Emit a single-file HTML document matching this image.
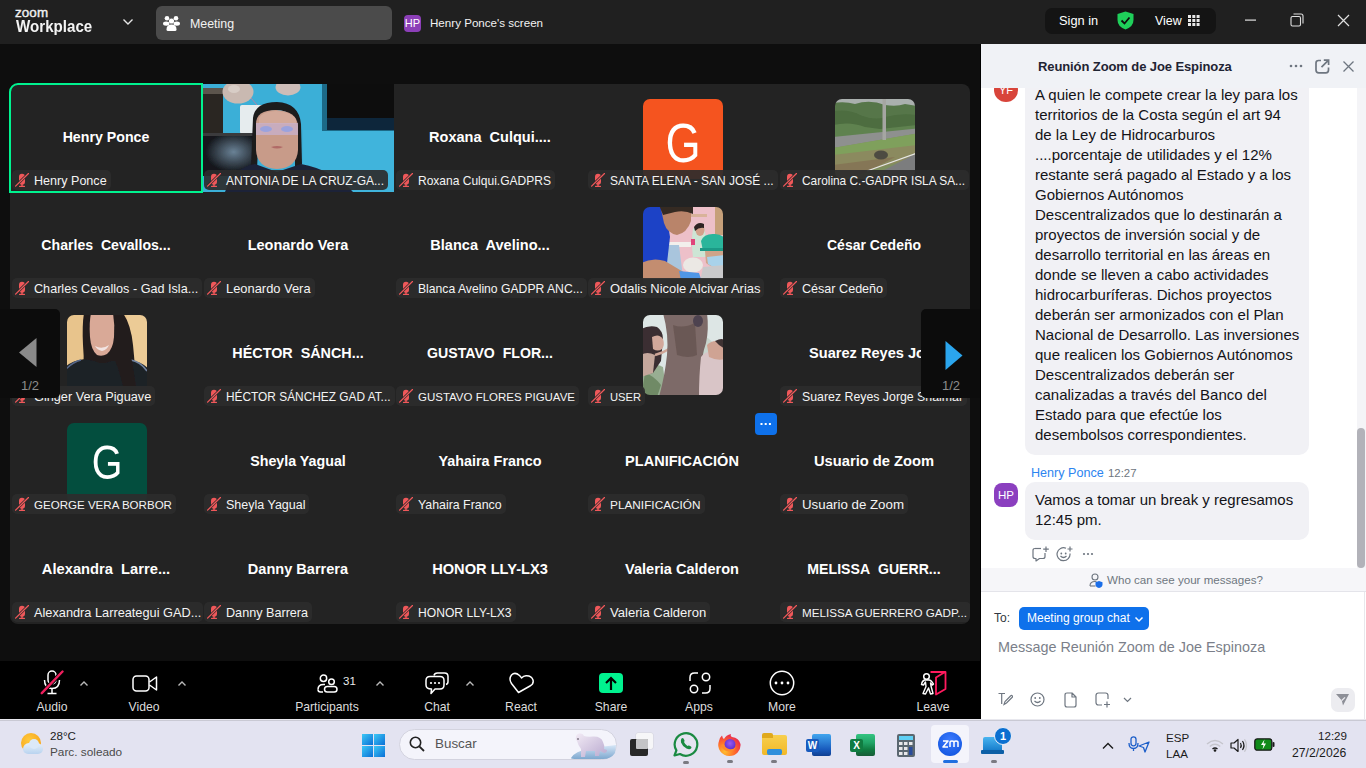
<!DOCTYPE html>
<html><head><meta charset="utf-8"><title>Zoom Meeting</title><style>
*{margin:0;padding:0;box-sizing:border-box}
html,body{width:1366px;height:768px;overflow:hidden;background:#0e0e0e;font-family:"Liberation Sans",sans-serif}
.abs{position:absolute;white-space:nowrap}
#topbar{position:absolute;left:0;top:0;width:1366px;height:44px;background:#202020}
.logo-zoom{position:absolute;left:15px;top:5px;font-size:13.4px;font-weight:400;color:#f0f0f0;letter-spacing:0.1px;-webkit-text-stroke:0.4px #f0f0f0}
.logo-wp{position:absolute;left:16px;top:18px;font-size:15.6px;font-weight:700;color:#f4f4f4;transform:scaleX(0.97);transform-origin:0 0}
#meettab{position:absolute;left:156px;top:6px;width:236px;height:34px;border-radius:6px;background:#4b4b4b}
.hpbadge{background:#8c3fb8;color:#fff;text-align:center}
#signpill{position:absolute;left:1045px;top:8px;width:171px;height:26px;border-radius:7px;background:#141414}
#grid{position:absolute;left:10px;top:84px;width:960px;height:540px;background:#232323;border-radius:8px;overflow:hidden}
.cell{position:absolute;width:192px;height:108px}
.cname{position:absolute;left:0;top:45px;width:192px;text-align:center;font-size:14.3px;font-weight:700;color:#fff;white-space:nowrap;overflow:hidden}
.av{position:absolute;left:57px;top:15px;width:80px;height:80px;border-radius:7px;overflow:hidden}
.avg{position:absolute;left:0;top:17px;width:80px;text-align:center;font-size:50px;color:#fff}
.lbl{position:absolute;left:2px;top:86px;height:20px;max-width:191px;border-radius:5px;background:rgba(44,44,44,0.92);padding:0 4px 0 22px;overflow:hidden}
.ltx{display:block;font-size:12.8px;line-height:22px;color:#f4f4f4;white-space:nowrap}
#activeb{position:absolute;left:9px;top:83px;width:194px;height:110px;border:2px solid #00f28f;border-radius:9px 0 0 0}
.nav{position:absolute;top:309px;width:60px;height:89px;background:#0c0c0c}
.navt{position:absolute;top:69px;width:60px;text-align:center;font-size:13px;color:#8c8c8c}
#toolbar{position:absolute;left:0;top:661px;width:981px;height:58px;background:#000}
.tl{position:absolute;top:700px;width:80px;text-align:center;font-size:12.2px;color:#dcdcdc}
#chat{position:absolute;left:981px;top:44px;width:385px;height:676px;background:#fff;overflow:hidden}
#chathead{position:absolute;left:0;top:0;width:385px;height:44px;background:#f0f2f6}
#msgs{position:absolute;left:0;top:44px;width:385px;height:480px;overflow:hidden;background:#fff}
.ml{position:absolute;font-size:15px;line-height:20px;color:#131318;white-space:nowrap}
#whocan{position:absolute;left:0;top:524px;width:385px;height:24px;background:#f6f6f9;border-bottom:1px solid #e4e4ea}
#inputarea{position:absolute;left:0;top:548px;width:385px;height:128px;background:#fff}
#taskbar{position:absolute;left:0;top:720px;width:1366px;height:48px;background:#e3e3f1;border-top:1px solid #c9c9d4}
</style></head>
<body>

<div id="topbar">
  <div class="logo-zoom">zoom</div>
  <div class="logo-wp">Workplace</div>
  <svg class="abs" style="left:122px;top:18px" width="12" height="8" viewBox="0 0 12 8"><path d="M1.5 1.5 L6 6 L10.5 1.5" stroke="#e6e6e6" stroke-width="1.4" fill="none"/></svg>
  <div id="meettab">
    <svg class="abs" style="left:7px;top:9px" width="17" height="16" viewBox="0 0 17 16">
      <circle cx="4" cy="3.2" r="2.3" fill="#fff"/><circle cx="13" cy="3.2" r="2.3" fill="#fff"/><circle cx="8.5" cy="6" r="2.6" fill="#fff"/>
      <ellipse cx="3.2" cy="8.6" rx="3.2" ry="2.2" fill="#fff"/><ellipse cx="13.8" cy="8.6" rx="3.2" ry="2.2" fill="#fff"/>
      <path d="M3.5 14.5 Q3.5 9.5 8.5 9.5 Q13.5 9.5 13.5 14.5 Q13.5 16 12 16 L5 16 Q3.5 16 3.5 14.5Z" fill="#fff"/>
    </svg>
    <span class="abs" style="left:34px;top:11px;font-size:12.4px;color:#f2f2f2">Meeting</span>
  </div>
  <div class="abs hpbadge" style="left:404px;top:15px;width:17px;height:17px;font-size:11px;line-height:17px;border-radius:4px">HP</div>
  <span class="abs" style="left:430px;top:16px;font-size:11.6px;color:#f2f2f2">Henry Ponce's screen</span>

  <div id="signpill">
    <span class="abs" style="left:14px;top:5px;font-size:12.8px;color:#fff">Sign in</span>
    <svg class="abs" style="left:72px;top:3px" width="17" height="19" viewBox="0 0 17 19"><path d="M8.5 0.5 L16.5 3 L16.5 9 Q16.5 15.5 8.5 18.5 Q0.5 15.5 0.5 9 L0.5 3 Z" fill="#1fcf5a"/><path d="M4.5 9.5 L7.5 12.5 L12.5 6.5" stroke="#0d0d0d" stroke-width="1.8" fill="none"/></svg>
    <span class="abs" style="left:110px;top:6px;font-size:12.4px;color:#fff">View</span>
    <svg class="abs" style="left:143px;top:7px" width="12" height="11" viewBox="0 0 12 11"><g fill="#e8e8e8"><rect x="0" y="0" width="3" height="3"/><rect x="4.3" y="0" width="3" height="3"/><rect x="8.6" y="0" width="3" height="3"/><rect x="0" y="4" width="3" height="3"/><rect x="4.3" y="4" width="3" height="3"/><rect x="8.6" y="4" width="3" height="3"/><rect x="0" y="8" width="3" height="3"/><rect x="4.3" y="8" width="3" height="3"/><rect x="8.6" y="8" width="3" height="3"/></g></svg>
  </div>
  <svg class="abs" style="left:1245px;top:19px" width="12" height="3"><rect x="0" y="0.5" width="11" height="1.2" fill="#e0e0e0"/></svg>
  <svg class="abs" style="left:1290px;top:13px" width="14" height="14" viewBox="0 0 14 14"><rect x="1" y="3.5" width="9.5" height="9.5" rx="1.5" stroke="#e0e0e0" stroke-width="1.1" fill="none"/><path d="M3.5 1 L11 1 Q13 1 13 3 L13 10.5" stroke="#e0e0e0" stroke-width="1.1" fill="none"/></svg>
  <svg class="abs" style="left:1337px;top:14px" width="13" height="13" viewBox="0 0 13 13"><path d="M1 1 L12 12 M12 1 L1 12" stroke="#e0e0e0" stroke-width="1.2"/></svg>
</div>

<div id="grid">
<div class="cell" style="left:0px;top:0px"><div class="cname" style="font-size:14.2px">Henry Ponce</div><div class="lbl"><svg class="abs" style="left:3px;top:3px" width="14" height="14" viewBox="0 0 14 14"><rect x="4" y="0.8" width="6" height="11" rx="3" fill="#f0585a"/><rect x="6.3" y="11" width="1.4" height="2" fill="#f0585a"/><rect x="4" y="12.7" width="6" height="1.3" rx="0.6" fill="#f0585a"/><path d="M0.3 13.4 L13.7 0.2" stroke="#2b2b2b" stroke-width="2.6"/><path d="M0.6 13.1 L13.5 0.5" stroke="#f0585a" stroke-width="1.3" stroke-linecap="round"/></svg><span class="ltx" style="font-size:12.57px">Henry Ponce</span></div></div>
<div class="cell" style="left:192px;top:0px"><svg class="abs" style="left:1px;top:0" width="191" height="108" viewBox="0 0 191 108"><defs><filter id="vbl" x="-5%" y="-5%" width="110%" height="110%"><feGaussianBlur stdDeviation="0.6"/></filter>
<radialGradient id="refl" cx="0.6" cy="0.4" r="0.5"><stop offset="0" stop-color="#6a8296"/><stop offset="1" stop-color="#15181d"/></radialGradient></defs>
<g filter="url(#vbl)">
<rect x="-3" y="-3" width="197" height="114" fill="#3bafd7"/>
<rect x="100" y="46" width="94" height="65" fill="#3fb4dc"/>
<rect x="-3" y="4" width="23" height="48" fill="#2b2521"/>
<rect x="-3" y="4" width="23" height="6" fill="#5b544d"/>
<ellipse cx="35" cy="8" rx="15.5" ry="11.5" fill="#c9b9b1"/>
<ellipse cx="31" cy="5" rx="6" ry="4" fill="#d8cdc6"/>
<ellipse cx="85" cy="3" rx="12.5" ry="8.5" fill="#cdbdb8"/>
<path d="M48 14 L54 21" stroke="#d07a9a" stroke-width="0.8"/>
<rect x="37" y="21" width="24" height="29" rx="2" fill="#e6ecee"/>
<rect x="-3" y="49" width="56" height="3" fill="#3b3b3d"/>
<rect x="-3" y="52" width="56" height="40" fill="url(#refl)"/>
<rect x="119" y="-3" width="75" height="50" fill="#1e6a88"/>
<rect x="124" y="-3" width="70" height="37" fill="#0f0e11"/>
<rect x="124" y="34" width="70" height="12" fill="#10283a"/>
<path d="M50 34 Q52 18 74 18 Q96 19 98 40 L99 80 L92 86 L92 40 Q88 26 74 26 Q58 26 56 40 L54 86 L48 82 Z" fill="#1d1a1f"/>
<path d="M53 40 Q53 26 73 26 Q94 27 95 42 L95 66 Q94 84 74 85 Q54 84 53 66 Z" fill="#c89b89"/>
<path d="M56 34 Q60 27 73 27 Q90 28 93 36 L93 40 L56 40 Z" fill="#d3a999"/>
<path d="M53 39 L95 39 L95 51 L53 51 Z" fill="#c8b1cf" opacity="0.75"/>
<ellipse cx="63" cy="45" rx="6" ry="3" fill="#8fa0e6" opacity="0.8"/>
<ellipse cx="84" cy="45" rx="6" ry="3" fill="#8fa0e6" opacity="0.8"/>
<path d="M68 63 Q74 61 80 63 Q74 66 68 63Z" fill="#b06a66"/>
<path d="M22 108 Q30 84 52 80 L74 88 L98 80 Q130 86 150 108 Z" fill="#1d2239"/>
</g></svg><div class="lbl"><svg class="abs" style="left:3px;top:3px" width="14" height="14" viewBox="0 0 14 14"><rect x="4" y="0.8" width="6" height="11" rx="3" fill="#f0585a"/><rect x="6.3" y="11" width="1.4" height="2" fill="#f0585a"/><rect x="4" y="12.7" width="6" height="1.3" rx="0.6" fill="#f0585a"/><path d="M0.3 13.4 L13.7 0.2" stroke="#2b2b2b" stroke-width="2.6"/><path d="M0.6 13.1 L13.5 0.5" stroke="#f0585a" stroke-width="1.3" stroke-linecap="round"/></svg><span class="ltx" style="font-size:12.02px">ANTONIA DE LA CRUZ-GA...</span></div></div>
<div class="cell" style="left:384px;top:0px"><div class="cname" style="font-size:14.53px">Roxana&nbsp; Culqui....</div><div class="lbl"><svg class="abs" style="left:3px;top:3px" width="14" height="14" viewBox="0 0 14 14"><rect x="4" y="0.8" width="6" height="11" rx="3" fill="#f0585a"/><rect x="6.3" y="11" width="1.4" height="2" fill="#f0585a"/><rect x="4" y="12.7" width="6" height="1.3" rx="0.6" fill="#f0585a"/><path d="M0.3 13.4 L13.7 0.2" stroke="#2b2b2b" stroke-width="2.6"/><path d="M0.6 13.1 L13.5 0.5" stroke="#f0585a" stroke-width="1.3" stroke-linecap="round"/></svg><span class="ltx" style="font-size:12.03px">Roxana Culqui.GADPRS</span></div></div>
<div class="cell" style="left:576px;top:0px"><div class="av" style="background:#f5541f"><span class="avg" style="font-size:55px;line-height:55px;top:17px;transform:scaleX(0.82)">G</span></div><div class="lbl"><svg class="abs" style="left:3px;top:3px" width="14" height="14" viewBox="0 0 14 14"><rect x="4" y="0.8" width="6" height="11" rx="3" fill="#f0585a"/><rect x="6.3" y="11" width="1.4" height="2" fill="#f0585a"/><rect x="4" y="12.7" width="6" height="1.3" rx="0.6" fill="#f0585a"/><path d="M0.3 13.4 L13.7 0.2" stroke="#2b2b2b" stroke-width="2.6"/><path d="M0.6 13.1 L13.5 0.5" stroke="#f0585a" stroke-width="1.3" stroke-linecap="round"/></svg><span class="ltx" style="font-size:11.99px">SANTA ELENA - SAN JOSÉ ...</span></div></div>
<div class="cell" style="left:768px;top:0px"><div class="av"><svg class="abs" style="left:0;top:0" width="80" height="80" viewBox="0 0 80 80"><defs><filter id="bl54959" x="-10%" y="-10%" width="120%" height="120%"><feGaussianBlur stdDeviation="0.5"/></filter></defs><g filter="url(#bl54959)">
<rect x="-2" y="-2" width="84" height="84" fill="#7d8f5e"/>
<rect x="-2" y="-2" width="84" height="10" fill="#aab0ae"/>
<path d="M-2 4 Q10 2 20 5 Q35 0 50 6 Q62 8 70 5 L82 7 L82 31 L-2 39 Z" fill="#56764a"/>
<path d="M-2 12 Q15 10 25 16 Q40 22 50 18 Q65 14 82 16 L82 30 L-2 38 Z" fill="#4d6d3f"/>
<path d="M-2 26 Q15 22 30 28 L45 30 L82 26 L82 31 L-2 39 Z" fill="#5f8250"/>
<path d="M-2 38 L82 29.5 L82 34.5 L-2 49 Z" fill="#8e908f"/>
<path d="M-2 49 L82 34.5 L82 56 L-2 82 Z" fill="#7fa05c"/>
<path d="M-2 56 L82 46 L82 58 L-2 82 Z" fill="#8b8a5e"/>
<path d="M-2 66 L60 58 L30 74 L-2 82 Z" fill="#857656"/>
<path d="M28 82 L82 54 L82 82 Z" fill="#7c7d7e"/>
<path d="M32 72 L82 54" stroke="#e6e6e6" stroke-width="1.3"/>
<rect x="47.5" y="-2" width="3.5" height="43" fill="#a5a6a2"/>
<ellipse cx="46" cy="56" rx="7" ry="4.5" fill="#4e4c42"/>
</g></svg></div><div class="lbl"><svg class="abs" style="left:3px;top:3px" width="14" height="14" viewBox="0 0 14 14"><rect x="4" y="0.8" width="6" height="11" rx="3" fill="#f0585a"/><rect x="6.3" y="11" width="1.4" height="2" fill="#f0585a"/><rect x="4" y="12.7" width="6" height="1.3" rx="0.6" fill="#f0585a"/><path d="M0.3 13.4 L13.7 0.2" stroke="#2b2b2b" stroke-width="2.6"/><path d="M0.6 13.1 L13.5 0.5" stroke="#f0585a" stroke-width="1.3" stroke-linecap="round"/></svg><span class="ltx" style="font-size:11.89px">Carolina C.-GADPR ISLA SA...</span></div></div>
<div class="cell" style="left:0px;top:108px"><div class="cname" style="font-size:14.1px">Charles&nbsp; Cevallos...</div><div class="lbl"><svg class="abs" style="left:3px;top:3px" width="14" height="14" viewBox="0 0 14 14"><rect x="4" y="0.8" width="6" height="11" rx="3" fill="#f0585a"/><rect x="6.3" y="11" width="1.4" height="2" fill="#f0585a"/><rect x="4" y="12.7" width="6" height="1.3" rx="0.6" fill="#f0585a"/><path d="M0.3 13.4 L13.7 0.2" stroke="#2b2b2b" stroke-width="2.6"/><path d="M0.6 13.1 L13.5 0.5" stroke="#f0585a" stroke-width="1.3" stroke-linecap="round"/></svg><span class="ltx" style="font-size:12.64px">Charles Cevallos - Gad Isla...</span></div></div>
<div class="cell" style="left:192px;top:108px"><div class="cname" style="font-size:14.51px">Leonardo Vera</div><div class="lbl"><svg class="abs" style="left:3px;top:3px" width="14" height="14" viewBox="0 0 14 14"><rect x="4" y="0.8" width="6" height="11" rx="3" fill="#f0585a"/><rect x="6.3" y="11" width="1.4" height="2" fill="#f0585a"/><rect x="4" y="12.7" width="6" height="1.3" rx="0.6" fill="#f0585a"/><path d="M0.3 13.4 L13.7 0.2" stroke="#2b2b2b" stroke-width="2.6"/><path d="M0.6 13.1 L13.5 0.5" stroke="#f0585a" stroke-width="1.3" stroke-linecap="round"/></svg><span class="ltx" style="font-size:12.9px">Leonardo Vera</span></div></div>
<div class="cell" style="left:384px;top:108px"><div class="cname" style="font-size:14.55px">Blanca&nbsp; Avelino...</div><div class="lbl"><svg class="abs" style="left:3px;top:3px" width="14" height="14" viewBox="0 0 14 14"><rect x="4" y="0.8" width="6" height="11" rx="3" fill="#f0585a"/><rect x="6.3" y="11" width="1.4" height="2" fill="#f0585a"/><rect x="4" y="12.7" width="6" height="1.3" rx="0.6" fill="#f0585a"/><path d="M0.3 13.4 L13.7 0.2" stroke="#2b2b2b" stroke-width="2.6"/><path d="M0.6 13.1 L13.5 0.5" stroke="#f0585a" stroke-width="1.3" stroke-linecap="round"/></svg><span class="ltx" style="font-size:12.18px">Blanca Avelino GADPR ANC...</span></div></div>
<div class="cell" style="left:576px;top:108px"><div class="av"><svg class="abs" style="left:0;top:0" width="80" height="80" viewBox="0 0 80 80"><defs><filter id="bl49196" x="-10%" y="-10%" width="120%" height="120%"><feGaussianBlur stdDeviation="0.6"/></filter></defs><g filter="url(#bl49196)">
<rect x="-2" y="-2" width="84" height="84" fill="#edc0c9"/>
<rect x="72" y="-2" width="10" height="30" fill="#c6a07a"/>
<rect x="44" y="7" width="20" height="3" fill="#d9b39a"/>
<rect x="26" y="35" width="22" height="5" fill="#f2efec"/>
<path d="M50 22 Q55 16 61 20 L63 30 Q66 40 64 50 L50 50 Q48 35 50 22Z" fill="#cde5d5"/>
<ellipse cx="57" cy="23" rx="4.5" ry="6" fill="#d2a08b"/>
<path d="M51 20 Q55 14 61 17 L61 21 Q56 20 52 24 Z" fill="#2d2422"/>
<rect x="48" y="32" width="4" height="6" fill="#e0457a"/>
<path d="M22 38 L36 38 L40 70 L22 70Z" fill="#a9c5dd"/>
<path d="M-2 -2 L16 -2 L24 10 L27 30 L24 56 L-2 62 Z" fill="#1f43c6"/>
<path d="M18 2 Q30 -4 48 2 L48 14 Q44 26 34 28 Q24 26 21 16 Z" fill="#b9846a"/>
<path d="M16 -2 L50 -2 L50 7 Q42 3 32 5 L20 8 Z" fill="#352a24"/>
<path d="M-2 56 Q10 50 22 54 L42 66 L40 74 L-2 76Z" fill="#c38d6f"/>
<ellipse cx="50" cy="58" rx="10" ry="7.5" fill="#ebe8e4"/>
<path d="M36 64 L56 66 L58 72 L38 73 Z" fill="#4f96e6"/>
<path d="M58 34 Q61 26 72 27 Q82 28 82 34 L82 44 L60 44 Z" fill="#2bb59b"/>
<rect x="57" y="41" width="25" height="3" fill="#1f9a86"/>
<path d="M62 44 L82 44 L82 60 Q70 62 63 56 Z" fill="#cfa48a"/>
<path d="M64 50 L82 48 L82 60 Q72 62 65 57 Z" fill="#a9d2ea"/>
<path d="M60 60 L82 58 L82 80 L56 80 Z" fill="#c9c9cb"/>
<rect x="-2" y="72" width="84" height="10" fill="#3b3d42"/>
</g></svg></div><div class="lbl"><svg class="abs" style="left:3px;top:3px" width="14" height="14" viewBox="0 0 14 14"><rect x="4" y="0.8" width="6" height="11" rx="3" fill="#f0585a"/><rect x="6.3" y="11" width="1.4" height="2" fill="#f0585a"/><rect x="4" y="12.7" width="6" height="1.3" rx="0.6" fill="#f0585a"/><path d="M0.3 13.4 L13.7 0.2" stroke="#2b2b2b" stroke-width="2.6"/><path d="M0.6 13.1 L13.5 0.5" stroke="#f0585a" stroke-width="1.3" stroke-linecap="round"/></svg><span class="ltx" style="font-size:12.96px">Odalis Nicole Alcivar Arias</span></div></div>
<div class="cell" style="left:768px;top:108px"><div class="cname" style="font-size:13.97px">César Cedeño</div><div class="lbl"><svg class="abs" style="left:3px;top:3px" width="14" height="14" viewBox="0 0 14 14"><rect x="4" y="0.8" width="6" height="11" rx="3" fill="#f0585a"/><rect x="6.3" y="11" width="1.4" height="2" fill="#f0585a"/><rect x="4" y="12.7" width="6" height="1.3" rx="0.6" fill="#f0585a"/><path d="M0.3 13.4 L13.7 0.2" stroke="#2b2b2b" stroke-width="2.6"/><path d="M0.6 13.1 L13.5 0.5" stroke="#f0585a" stroke-width="1.3" stroke-linecap="round"/></svg><span class="ltx" style="font-size:12.59px">César Cedeño</span></div></div>
<div class="cell" style="left:0px;top:216px"><div class="av"><svg class="abs" style="left:0;top:0" width="80" height="80" viewBox="0 0 80 80"><defs><filter id="bl19691" x="-10%" y="-10%" width="120%" height="120%"><feGaussianBlur stdDeviation="0.7"/></filter></defs><g filter="url(#bl19691)">
<rect x="-2" y="-2" width="84" height="84" fill="#e8c48c"/>
<rect x="60" y="-2" width="22" height="60" fill="#eccb96"/>
<path d="M17 -2 L56 -2 Q64 10 66 30 Q68 50 70 80 L14 80 Q18 50 16 30 Q15 10 17 -2 Z" fill="#231c1d"/>
<path d="M24 -2 L46 -2 Q48 10 47 22 Q46 34 40 39 Q35 42 30 40 Q24 35 23 22 Q22 8 24 -2 Z" fill="#d9a997"/>
<path d="M28 31 Q35 35 42 30 Q40 35 35 36 Q30 35 28 31Z" fill="#f2e4e2"/>
<path d="M-2 52 Q6 45 18 44 L28 46 Q35 50 44 46 L62 45 Q74 46 82 54 L82 82 L-2 82 Z" fill="#1f2125"/>
<path d="M64 45 Q74 47 80 56" stroke="#6f82a0" stroke-width="1.6" fill="none"/>
<path d="M-1 54 Q6 47 14 45" stroke="#55688a" stroke-width="1.4" fill="none"/>
<path d="M44 38 Q52 50 58 80 L70 80 Q66 50 62 30 Z" fill="#231c1d"/>
</g></svg></div><div class="lbl"><svg class="abs" style="left:3px;top:3px" width="14" height="14" viewBox="0 0 14 14"><rect x="4" y="0.8" width="6" height="11" rx="3" fill="#f0585a"/><rect x="6.3" y="11" width="1.4" height="2" fill="#f0585a"/><rect x="4" y="12.7" width="6" height="1.3" rx="0.6" fill="#f0585a"/><path d="M0.3 13.4 L13.7 0.2" stroke="#2b2b2b" stroke-width="2.6"/><path d="M0.6 13.1 L13.5 0.5" stroke="#f0585a" stroke-width="1.3" stroke-linecap="round"/></svg><span class="ltx" style="font-size:12.71px">Ginger Vera Piguave</span></div></div>
<div class="cell" style="left:192px;top:216px"><div class="cname" style="font-size:14.37px">HÉCTOR&nbsp; SÁNCH...</div><div class="lbl"><svg class="abs" style="left:3px;top:3px" width="14" height="14" viewBox="0 0 14 14"><rect x="4" y="0.8" width="6" height="11" rx="3" fill="#f0585a"/><rect x="6.3" y="11" width="1.4" height="2" fill="#f0585a"/><rect x="4" y="12.7" width="6" height="1.3" rx="0.6" fill="#f0585a"/><path d="M0.3 13.4 L13.7 0.2" stroke="#2b2b2b" stroke-width="2.6"/><path d="M0.6 13.1 L13.5 0.5" stroke="#f0585a" stroke-width="1.3" stroke-linecap="round"/></svg><span class="ltx" style="font-size:11.89px">HÉCTOR SÁNCHEZ GAD AT...</span></div></div>
<div class="cell" style="left:384px;top:216px"><div class="cname" style="font-size:14.13px">GUSTAVO&nbsp; FLOR...</div><div class="lbl"><svg class="abs" style="left:3px;top:3px" width="14" height="14" viewBox="0 0 14 14"><rect x="4" y="0.8" width="6" height="11" rx="3" fill="#f0585a"/><rect x="6.3" y="11" width="1.4" height="2" fill="#f0585a"/><rect x="4" y="12.7" width="6" height="1.3" rx="0.6" fill="#f0585a"/><path d="M0.3 13.4 L13.7 0.2" stroke="#2b2b2b" stroke-width="2.6"/><path d="M0.6 13.1 L13.5 0.5" stroke="#f0585a" stroke-width="1.3" stroke-linecap="round"/></svg><span class="ltx" style="font-size:11.49px">GUSTAVO FLORES PIGUAVE</span></div></div>
<div class="cell" style="left:576px;top:216px"><div class="av"><svg class="abs" style="left:0;top:0" width="80" height="80" viewBox="0 0 80 80"><defs><filter id="bl16928" x="-10%" y="-10%" width="120%" height="120%"><feGaussianBlur stdDeviation="0.6"/></filter></defs><g filter="url(#bl16928)">
<rect x="-2" y="-2" width="84" height="84" fill="#dde6e5"/>
<path d="M60 20 Q70 25 74 35 L82 30 L82 50 L60 50 Z" fill="#c8d5cd"/>
<path d="M-2 50 Q8 46 20 52 L24 82 L-2 82 Z" fill="#98ae92"/>
<path d="M2 58 Q10 60 18 70 L14 82 L-2 82 Z" fill="#6f8a66"/>
<path d="M-2 14 Q6 10 14 12 Q20 16 20 24 L18 46 L10 58 L-2 60 Z" fill="#3a2e30"/>
<path d="M9 22 Q16 18 20 24 Q22 30 19 34 Q15 37 10 34 Z" fill="#d2a89b"/>
<path d="M-2 40 Q4 36 12 40 L10 58 L-2 62 Z" fill="#c5a79c"/>
<path d="M12 40 Q20 38 26 34" stroke="#cfa597" stroke-width="2.5" fill="none"/>
<path d="M20 -2 L64 -2 Q66 14 63 28 Q58 42 58 60 L56 82 L16 82 Q22 60 24 40 Q26 20 20 -2 Z" fill="#7d6a67"/>
<path d="M30 10 Q40 14 52 8 L54 40 Q46 44 34 40 Z" fill="#6b5855"/>
<ellipse cx="55" cy="6" rx="5" ry="6" fill="#4d4350"/>
<path d="M58 42 Q64 34 74 38 L82 36 L82 82 L56 82 Q56 60 58 42 Z" fill="#d9c5c7"/>
<path d="M64 30 Q70 24 78 27 L82 30 L82 44 Q74 46 66 42 Z" fill="#cfa393"/>
<path d="M72 26 Q80 22 82 26 L82 34 L76 30 Z" fill="#3e3033"/>
</g></svg></div><div class="lbl"><svg class="abs" style="left:3px;top:3px" width="14" height="14" viewBox="0 0 14 14"><rect x="4" y="0.8" width="6" height="11" rx="3" fill="#f0585a"/><rect x="6.3" y="11" width="1.4" height="2" fill="#f0585a"/><rect x="4" y="12.7" width="6" height="1.3" rx="0.6" fill="#f0585a"/><path d="M0.3 13.4 L13.7 0.2" stroke="#2b2b2b" stroke-width="2.6"/><path d="M0.6 13.1 L13.5 0.5" stroke="#f0585a" stroke-width="1.3" stroke-linecap="round"/></svg><span class="ltx" style="font-size:11.19px">USER</span></div></div>
<div class="cell" style="left:768px;top:216px"><div class="cname" style="left:31px;width:auto;text-align:left;font-size:14.6px">Suarez Reyes Jo...</div><div class="lbl"><svg class="abs" style="left:3px;top:3px" width="14" height="14" viewBox="0 0 14 14"><rect x="4" y="0.8" width="6" height="11" rx="3" fill="#f0585a"/><rect x="6.3" y="11" width="1.4" height="2" fill="#f0585a"/><rect x="4" y="12.7" width="6" height="1.3" rx="0.6" fill="#f0585a"/><path d="M0.3 13.4 L13.7 0.2" stroke="#2b2b2b" stroke-width="2.6"/><path d="M0.6 13.1 L13.5 0.5" stroke="#f0585a" stroke-width="1.3" stroke-linecap="round"/></svg><span class="ltx" style="font-size:12.33px">Suarez Reyes Jorge Shaimar</span></div></div>
<div class="cell" style="left:0px;top:324px"><div class="av" style="background:#034e3e"><span class="avg" style="font-size:48px;line-height:48px;top:15.5px;transform:scaleX(0.82)">G</span></div><div class="lbl"><svg class="abs" style="left:3px;top:3px" width="14" height="14" viewBox="0 0 14 14"><rect x="4" y="0.8" width="6" height="11" rx="3" fill="#f0585a"/><rect x="6.3" y="11" width="1.4" height="2" fill="#f0585a"/><rect x="4" y="12.7" width="6" height="1.3" rx="0.6" fill="#f0585a"/><path d="M0.3 13.4 L13.7 0.2" stroke="#2b2b2b" stroke-width="2.6"/><path d="M0.6 13.1 L13.5 0.5" stroke="#f0585a" stroke-width="1.3" stroke-linecap="round"/></svg><span class="ltx" style="font-size:11.55px">GEORGE VERA BORBOR</span></div></div>
<div class="cell" style="left:192px;top:324px"><div class="cname" style="font-size:14.26px">Sheyla Yagual</div><div class="lbl"><svg class="abs" style="left:3px;top:3px" width="14" height="14" viewBox="0 0 14 14"><rect x="4" y="0.8" width="6" height="11" rx="3" fill="#f0585a"/><rect x="6.3" y="11" width="1.4" height="2" fill="#f0585a"/><rect x="4" y="12.7" width="6" height="1.3" rx="0.6" fill="#f0585a"/><path d="M0.3 13.4 L13.7 0.2" stroke="#2b2b2b" stroke-width="2.6"/><path d="M0.6 13.1 L13.5 0.5" stroke="#f0585a" stroke-width="1.3" stroke-linecap="round"/></svg><span class="ltx" style="font-size:12.5px">Sheyla Yagual</span></div></div>
<div class="cell" style="left:384px;top:324px"><div class="cname" style="font-size:14.4px">Yahaira Franco</div><div class="lbl"><svg class="abs" style="left:3px;top:3px" width="14" height="14" viewBox="0 0 14 14"><rect x="4" y="0.8" width="6" height="11" rx="3" fill="#f0585a"/><rect x="6.3" y="11" width="1.4" height="2" fill="#f0585a"/><rect x="4" y="12.7" width="6" height="1.3" rx="0.6" fill="#f0585a"/><path d="M0.3 13.4 L13.7 0.2" stroke="#2b2b2b" stroke-width="2.6"/><path d="M0.6 13.1 L13.5 0.5" stroke="#f0585a" stroke-width="1.3" stroke-linecap="round"/></svg><span class="ltx" style="font-size:12.37px">Yahaira Franco</span></div></div>
<div class="cell" style="left:576px;top:324px"><div class="cname" style="font-size:14.54px">PLANIFICACIÓN</div><div class="lbl"><svg class="abs" style="left:3px;top:3px" width="14" height="14" viewBox="0 0 14 14"><rect x="4" y="0.8" width="6" height="11" rx="3" fill="#f0585a"/><rect x="6.3" y="11" width="1.4" height="2" fill="#f0585a"/><rect x="4" y="12.7" width="6" height="1.3" rx="0.6" fill="#f0585a"/><path d="M0.3 13.4 L13.7 0.2" stroke="#2b2b2b" stroke-width="2.6"/><path d="M0.6 13.1 L13.5 0.5" stroke="#f0585a" stroke-width="1.3" stroke-linecap="round"/></svg><span class="ltx" style="font-size:11.82px">PLANIFICACIÓN</span></div></div>
<div class="cell" style="left:768px;top:324px"><div class="cname" style="font-size:14.71px">Usuario de Zoom</div><div class="lbl"><svg class="abs" style="left:3px;top:3px" width="14" height="14" viewBox="0 0 14 14"><rect x="4" y="0.8" width="6" height="11" rx="3" fill="#f0585a"/><rect x="6.3" y="11" width="1.4" height="2" fill="#f0585a"/><rect x="4" y="12.7" width="6" height="1.3" rx="0.6" fill="#f0585a"/><path d="M0.3 13.4 L13.7 0.2" stroke="#2b2b2b" stroke-width="2.6"/><path d="M0.6 13.1 L13.5 0.5" stroke="#f0585a" stroke-width="1.3" stroke-linecap="round"/></svg><span class="ltx" style="font-size:13.3px">Usuario de Zoom</span></div></div>
<div class="cell" style="left:0px;top:432px"><div class="cname" style="font-size:14.71px">Alexandra&nbsp; Larre...</div><div class="lbl"><svg class="abs" style="left:3px;top:3px" width="14" height="14" viewBox="0 0 14 14"><rect x="4" y="0.8" width="6" height="11" rx="3" fill="#f0585a"/><rect x="6.3" y="11" width="1.4" height="2" fill="#f0585a"/><rect x="4" y="12.7" width="6" height="1.3" rx="0.6" fill="#f0585a"/><path d="M0.3 13.4 L13.7 0.2" stroke="#2b2b2b" stroke-width="2.6"/><path d="M0.6 13.1 L13.5 0.5" stroke="#f0585a" stroke-width="1.3" stroke-linecap="round"/></svg><span class="ltx" style="font-size:12.76px">Alexandra Larreategui GAD...</span></div></div>
<div class="cell" style="left:192px;top:432px"><div class="cname" style="font-size:14.55px">Danny Barrera</div><div class="lbl"><svg class="abs" style="left:3px;top:3px" width="14" height="14" viewBox="0 0 14 14"><rect x="4" y="0.8" width="6" height="11" rx="3" fill="#f0585a"/><rect x="6.3" y="11" width="1.4" height="2" fill="#f0585a"/><rect x="4" y="12.7" width="6" height="1.3" rx="0.6" fill="#f0585a"/><path d="M0.3 13.4 L13.7 0.2" stroke="#2b2b2b" stroke-width="2.6"/><path d="M0.6 13.1 L13.5 0.5" stroke="#f0585a" stroke-width="1.3" stroke-linecap="round"/></svg><span class="ltx" style="font-size:12.63px">Danny Barrera</span></div></div>
<div class="cell" style="left:384px;top:432px"><div class="cname" style="font-size:14.63px">HONOR LLY-LX3</div><div class="lbl"><svg class="abs" style="left:3px;top:3px" width="14" height="14" viewBox="0 0 14 14"><rect x="4" y="0.8" width="6" height="11" rx="3" fill="#f0585a"/><rect x="6.3" y="11" width="1.4" height="2" fill="#f0585a"/><rect x="4" y="12.7" width="6" height="1.3" rx="0.6" fill="#f0585a"/><path d="M0.3 13.4 L13.7 0.2" stroke="#2b2b2b" stroke-width="2.6"/><path d="M0.6 13.1 L13.5 0.5" stroke="#f0585a" stroke-width="1.3" stroke-linecap="round"/></svg><span class="ltx" style="font-size:12.12px">HONOR LLY-LX3</span></div></div>
<div class="cell" style="left:576px;top:432px"><div class="cname" style="font-size:14.54px">Valeria Calderon</div><div class="lbl"><svg class="abs" style="left:3px;top:3px" width="14" height="14" viewBox="0 0 14 14"><rect x="4" y="0.8" width="6" height="11" rx="3" fill="#f0585a"/><rect x="6.3" y="11" width="1.4" height="2" fill="#f0585a"/><rect x="4" y="12.7" width="6" height="1.3" rx="0.6" fill="#f0585a"/><path d="M0.3 13.4 L13.7 0.2" stroke="#2b2b2b" stroke-width="2.6"/><path d="M0.6 13.1 L13.5 0.5" stroke="#f0585a" stroke-width="1.3" stroke-linecap="round"/></svg><span class="ltx" style="font-size:13.05px">Valeria Calderon</span></div></div>
<div class="cell" style="left:768px;top:432px"><div class="cname" style="font-size:14.11px">MELISSA&nbsp; GUERR...</div><div class="lbl"><svg class="abs" style="left:3px;top:3px" width="14" height="14" viewBox="0 0 14 14"><rect x="4" y="0.8" width="6" height="11" rx="3" fill="#f0585a"/><rect x="6.3" y="11" width="1.4" height="2" fill="#f0585a"/><rect x="4" y="12.7" width="6" height="1.3" rx="0.6" fill="#f0585a"/><path d="M0.3 13.4 L13.7 0.2" stroke="#2b2b2b" stroke-width="2.6"/><path d="M0.6 13.1 L13.5 0.5" stroke="#f0585a" stroke-width="1.3" stroke-linecap="round"/></svg><span class="ltx" style="font-size:11.67px">MELISSA GUERRERO GADP...</span></div></div>
</div>
<div id="activeb"></div>

<div class="nav" style="left:0;border-radius:0 5px 5px 0">
  <svg class="abs" style="left:19px;top:29px" width="18" height="29" viewBox="0 0 18 29"><path d="M17.5 0 L17.5 29 L0 14.5 Z" fill="#8a8a8a"/></svg>
  <div class="navt">1/2</div>
</div>
<div class="nav" style="left:921px;border-radius:5px 0 0 5px">
  <svg class="abs" style="left:24px;top:32px" width="18" height="29" viewBox="0 0 18 29"><path d="M0.5 0 L17.5 14.5 L0.5 29 Z" fill="#2ba6ee"/></svg>
  <div class="navt">1/2</div>
</div>
<div class="abs" style="left:755px;top:413px;width:22px;height:22px;border-radius:4px;background:#0e71eb"></div>
<svg class="abs" style="left:760px;top:423px" width="12" height="3"><rect x="0.5" y="0" width="2" height="2" fill="#fff"/><rect x="4.7" y="0" width="2" height="2" fill="#fff"/><rect x="8.9" y="0" width="2" height="2" fill="#fff"/></svg>


<div id="toolbar"></div>
<svg class="abs" style="left:40px;top:670px" width="24" height="25" viewBox="0 0 24 25">
  <rect x="8" y="1" width="8" height="13" rx="4" stroke="#fff" stroke-width="1.5" fill="none"/>
  <path d="M4.5 10 Q4.5 18.5 12 18.5 Q19.5 18.5 19.5 10" stroke="#fff" stroke-width="1.5" fill="none"/>
  <path d="M12 18.5 L12 23.5 M7.5 23.5 L16.5 23.5" stroke="#fff" stroke-width="1.5"/>
  <path d="M1.5 23.5 L22.5 1.5" stroke="#000" stroke-width="4"/>
  <path d="M1.8 23.2 L22.5 1.5" stroke="#ee1f5d" stroke-width="2.4" stroke-linecap="round"/>
</svg>
<div class="tl" style="left:12px">Audio</div>
<svg class="abs" style="left:79px;top:680px" width="10" height="7" viewBox="0 0 10 7"><path d="M1.5 5.5 L5 2 L8.5 5.5" stroke="#b9b9b9" stroke-width="1.4" fill="none"/></svg>
<svg class="abs" style="left:132px;top:675px" width="26" height="17" viewBox="0 0 26 17"><rect x="1" y="1" width="16" height="15" rx="3.5" stroke="#fff" stroke-width="1.5" fill="none"/><path d="M17.5 7 L24.5 2 L24.5 15 L17.5 10" stroke="#fff" stroke-width="1.5" fill="none" stroke-linejoin="round"/></svg>
<div class="tl" style="left:104px">Video</div>
<svg class="abs" style="left:177px;top:680px" width="10" height="7" viewBox="0 0 10 7"><path d="M1.5 5.5 L5 2 L8.5 5.5" stroke="#b9b9b9" stroke-width="1.4" fill="none"/></svg>
<svg class="abs" style="left:317px;top:674px" width="21" height="19" viewBox="0 0 21 19"><circle cx="6.5" cy="4.2" r="3.2" stroke="#fff" stroke-width="1.5" fill="none"/><path d="M1 15.5 Q1 10.5 6.5 10.5 L8 10.5" stroke="#fff" stroke-width="1.5" fill="none"/><path d="M1 15.5 Q1 18 3.5 18 L6 18" stroke="#fff" stroke-width="1.5" fill="none"/><circle cx="14.5" cy="7.8" r="2.8" stroke="#fff" stroke-width="1.5" fill="none"/><rect x="7.5" y="12.5" width="12.5" height="5.5" rx="2.75" stroke="#fff" stroke-width="1.5" fill="none"/></svg>
<div class="abs" style="left:343px;top:675px;font-size:11.5px;color:#eaeaea">31</div>
<div class="tl" style="left:287px">Participants</div>
<svg class="abs" style="left:375px;top:680px" width="10" height="7" viewBox="0 0 10 7"><path d="M1.5 5.5 L5 2 L8.5 5.5" stroke="#b9b9b9" stroke-width="1.4" fill="none"/></svg>
<svg class="abs" style="left:425px;top:672px" width="24" height="23" viewBox="0 0 24 23"><path d="M9 3.5 Q9.5 1 12.5 1 L19.5 1 Q23 1 23 4.5 L23 9.5 Q23 12 21 12.5" stroke="#fff" stroke-width="1.5" fill="none"/><path d="M5 4.5 L15 4.5 Q19 4.5 19 8.5 L19 13 Q19 17 15 17 L10 17 L6 21.5 L6.5 17 Q1 17 1 13 L1 8.5 Q1 4.5 5 4.5 Z" stroke="#fff" stroke-width="1.5" fill="#000" stroke-linejoin="round"/><circle cx="6" cy="11" r="1.1" fill="#fff"/><circle cx="10" cy="11" r="1.1" fill="#fff"/><circle cx="14" cy="11" r="1.1" fill="#fff"/></svg>
<div class="tl" style="left:397px">Chat</div>
<svg class="abs" style="left:465px;top:680px" width="10" height="7" viewBox="0 0 10 7"><path d="M1.5 5.5 L5 2 L8.5 5.5" stroke="#b9b9b9" stroke-width="1.4" fill="none"/></svg>
<svg class="abs" style="left:509px;top:672px" width="26" height="22" viewBox="0 0 26 22"><path d="M9.5 20.5 L2.5 11.5 Q-0.5 7 2.5 3 Q6 -0.5 10.5 3.5 Q12 5 12.5 6 Q14.5 4 17 3.8 Q22.5 3.5 24 8 Q25 12 21 14 Z" stroke="#fff" stroke-width="1.5" fill="none" stroke-linejoin="round"/></svg>
<div class="tl" style="left:481px">React</div>
<div class="abs" style="left:599px;top:673px;width:24px;height:20px;border-radius:4px;background:#00f28f"></div>
<svg class="abs" style="left:603px;top:675px" width="16" height="16" viewBox="0 0 16 16"><path d="M8 15 L8 3.5 M3 8 L8 3 L13 8" stroke="#000" stroke-width="2.2" fill="none"/></svg>
<div class="tl" style="left:571px">Share</div>
<svg class="abs" style="left:688px;top:671px" width="24" height="24" viewBox="0 0 24 24"><path d="M2 10 L2 6.5 Q2 2 6.5 2 L10 2" stroke="#fff" stroke-width="1.5" fill="none"/><circle cx="18" cy="6" r="3.7" stroke="#fff" stroke-width="1.5" fill="none"/><circle cx="6" cy="18" r="3.7" stroke="#fff" stroke-width="1.5" fill="none"/><path d="M22 14 L22 17.5 Q22 22 17.5 22 L14 22" stroke="#fff" stroke-width="1.5" fill="none"/></svg>
<div class="tl" style="left:659px">Apps</div>
<svg class="abs" style="left:769px;top:670px" width="26" height="26" viewBox="0 0 26 26"><circle cx="13" cy="13" r="11.7" stroke="#fff" stroke-width="1.5" fill="none"/><circle cx="7" cy="13" r="1.4" fill="#fff"/><circle cx="13" cy="13" r="1.4" fill="#fff"/><circle cx="19" cy="13" r="1.4" fill="#fff"/></svg>
<div class="tl" style="left:742px">More</div>
<svg class="abs" style="left:920px;top:669px" width="28" height="27" viewBox="0 0 28 27"><path d="M10.5 3 L25.5 3 L25.5 20 L16 25.5 L16 8.5 L25 3" stroke="#ff1a5e" stroke-width="1.8" fill="none" stroke-linejoin="round"/><circle cx="6.5" cy="7.5" r="2.8" stroke="#fff" stroke-width="1.5" fill="none"/><path d="M4.5 11 Q2 12 1.5 15.5 L3.5 16 L5.5 13 L6 17.5 L3 24.5 L5.5 25 L8.5 19 L10.5 25 L13 24.5 L11 17 L10.5 14 L12.5 16 L13.5 15 Q11 11 9 11 Z" stroke="#fff" stroke-width="1.4" fill="#000" stroke-linejoin="round"/></svg>
<div class="tl" style="left:893px">Leave</div>


<div id="chat">
  <div id="msgs">
    <div class="abs" style="left:44px;top:-40px;width:284px;height:407px;border-radius:10px;background:#f1f1f5"></div>
    <div class="abs" style="left:13px;top:-10px;width:24px;height:24px;border-radius:12px;background:#d8443a;color:#fff;font-size:11px;text-align:center;line-height:24px">YF</div>
    <div class="ml" style="left:54px;top:-3px">A quien le compete crear la ley para los</div>
<div class="ml" style="left:54px;top:17px">territorios de la Costa según el art 94</div>
<div class="ml" style="left:54px;top:37px">de la Ley de Hidrocarburos</div>
<div class="ml" style="left:54px;top:57px">....porcentaje de utilidades y el 12%</div>
<div class="ml" style="left:54px;top:77px">restante será pagado al Estado y a los</div>
<div class="ml" style="left:54px;top:97px">Gobiernos Autónomos</div>
<div class="ml" style="left:54px;top:117px">Descentralizados que lo destinarán a</div>
<div class="ml" style="left:54px;top:137px">proyectos de inversión social y de</div>
<div class="ml" style="left:54px;top:157px">desarrollo territorial en las áreas en</div>
<div class="ml" style="left:54px;top:177px">donde se lleven a cabo actividades</div>
<div class="ml" style="left:54px;top:197px">hidrocarburíferas. Dichos proyectos</div>
<div class="ml" style="left:54px;top:217px">deberán ser armonizados con el Plan</div>
<div class="ml" style="left:54px;top:237px">Nacional de Desarrollo. Las inversiones</div>
<div class="ml" style="left:54px;top:257px">que realicen los Gobiernos Autónomos</div>
<div class="ml" style="left:54px;top:277px">Descentralizados deberán ser</div>
<div class="ml" style="left:54px;top:297px">canalizadas a través del Banco del</div>
<div class="ml" style="left:54px;top:317px">Estado para que efectúe los</div>
<div class="ml" style="left:54px;top:337px">desembolsos correspondientes.</div>
    <div class="abs" style="left:50px;top:378px;font-size:12.6px;color:#2d84f0">Henry Ponce</div>
    <div class="abs" style="left:127px;top:379px;font-size:11.4px;color:#6e7680">12:27</div>
    <div class="abs" style="left:13px;top:395px;width:24px;height:24px;border-radius:8px;background:#8b3fbf;color:#fff;font-size:11.5px;text-align:center;line-height:24px">HP</div>
    <div class="abs" style="left:44px;top:394px;width:284px;height:58px;border-radius:10px;background:#f1f1f5"></div>
    <div class="ml" style="left:54px;top:402px">Vamos a tomar un break y regresamos</div>
<div class="ml" style="left:54px;top:422px">12:45 pm.</div>
    <svg class="abs" style="left:51px;top:458px" width="18" height="16" viewBox="0 0 18 16"><path d="M3 2.5 Q1 2.5 1 4.5 L1 10.5 Q1 12.5 3 12.5 L4 12.5 L4 15 L7.5 12.5 L11 12.5 Q13 12.5 13 10.5 L13 7" stroke="#6e7680" stroke-width="1.2" fill="none" stroke-linejoin="round"/><path d="M3 2.5 L9 2.5" stroke="#6e7680" stroke-width="1.2"/><path d="M14 0.5 L14 6 M11.2 3.2 L16.8 3.2" stroke="#6e7680" stroke-width="1.2"/></svg>
    <svg class="abs" style="left:75px;top:458px" width="18" height="16" viewBox="0 0 18 16"><path d="M10 2.2 A6.5 6.5 0 1 0 14 7.5" stroke="#6e7680" stroke-width="1.2" fill="none"/><circle cx="5.3" cy="7.5" r="0.9" fill="#6e7680"/><circle cx="9.7" cy="7.5" r="0.9" fill="#6e7680"/><path d="M4.5 10 Q7.5 13 10.5 10" stroke="#6e7680" stroke-width="1.2" fill="none"/><path d="M14 0.5 L14 5.5 M11.5 3 L16.5 3" stroke="#6e7680" stroke-width="1.2"/></svg>
    <svg class="abs" style="left:101px;top:464px" width="12" height="4"><circle cx="2" cy="2" r="1.1" fill="#6e7680"/><circle cx="6" cy="2" r="1.1" fill="#6e7680"/><circle cx="10" cy="2" r="1.1" fill="#6e7680"/></svg>
    <div class="abs" style="left:376px;top:0;width:9px;height:480px;background:#f4f4f7"></div>
    <div class="abs" style="left:376px;top:340px;width:8px;height:140px;border-radius:4px;background:#b2b2b9"></div>
  </div>
  <div id="chathead">
    <div class="abs" style="left:57px;top:15px;font-size:13px;font-weight:700;color:#1f2433;letter-spacing:-0.1px">Reunión Zoom de Joe Espinoza</div>
    <svg class="abs" style="left:308px;top:20px" width="14" height="4"><circle cx="2" cy="2" r="1.3" fill="#6e7680"/><circle cx="7" cy="2" r="1.3" fill="#6e7680"/><circle cx="12" cy="2" r="1.3" fill="#6e7680"/></svg>
    <svg class="abs" style="left:334px;top:15px" width="15" height="15" viewBox="0 0 15 15"><path d="M6 1.5 L3.5 1.5 Q1 1.5 1 4 L1 11 Q1 13.8 3.8 13.8 L10.8 13.8 Q13.5 13.8 13.5 11 L13.5 8.5" stroke="#6e7680" stroke-width="1.7" fill="none"/><path d="M6.5 8.2 L13 1.7 M8.8 1.2 L13.6 1.2 L13.6 6" stroke="#6e7680" stroke-width="1.7" fill="none"/></svg>
    <svg class="abs" style="left:361px;top:16px" width="13" height="13" viewBox="0 0 13 13"><path d="M1.5 1.5 L11.5 11.5 M11.5 1.5 L1.5 11.5" stroke="#6e7680" stroke-width="1.3"/></svg>
  </div>
  <div id="whocan">
    <svg class="abs" style="left:108px;top:5px" width="14" height="15" viewBox="0 0 14 15"><circle cx="6" cy="4" r="3" stroke="#6e7680" stroke-width="1.1" fill="none"/><path d="M1 13 Q1 8.5 6 8.5 Q7 8.5 7.5 8.8" stroke="#6e7680" stroke-width="1.1" fill="none"/><path d="M1 13 L6.5 13" stroke="#6e7680" stroke-width="1.1"/><path d="M10 8 L13.5 9.2 L13.5 11.5 Q13.5 14 10 15 Q6.5 14 6.5 11.5 L6.5 9.2Z" fill="#1b6ee8"/></svg>
    <div class="abs" style="left:126px;top:5px;font-size:11.6px;color:#6e7680">Who can see your messages?</div>
  </div>
  <div id="inputarea">
    <div class="abs" style="left:13px;top:19px;font-size:12px;color:#303742">To:</div>
    <div class="abs" style="left:38px;top:15px;width:130px;height:23px;border-radius:5px;background:#0e71eb"></div>
    <div class="abs" style="left:46px;top:19px;font-size:12px;color:#fff">Meeting group chat</div>
    <svg class="abs" style="left:153px;top:24px" width="10" height="7" viewBox="0 0 10 7"><path d="M1.5 1.5 L5 5 L8.5 1.5" stroke="#fff" stroke-width="1.5" fill="none"/></svg>
    <div class="abs" style="left:17px;top:47px;font-size:14.4px;color:#7b7f8a">Message Reunión Zoom de Joe Espinoza</div>
    <svg class="abs" style="left:17px;top:100px" width="15" height="14" viewBox="0 0 15 14"><path d="M0.5 1.5 L7 1.5 M3.7 1.5 L3.7 12" stroke="#6e7680" stroke-width="1.2" fill="none"/><path d="M6 12.5 L7 9.5 L12.5 4 Q13.5 3 14.3 3.8 Q15 4.6 14 5.5 L8.5 11 Z" stroke="#6e7680" stroke-width="1.1" fill="none"/></svg>
    <svg class="abs" style="left:49px;top:100px" width="15" height="15" viewBox="0 0 15 15"><circle cx="7.5" cy="7.5" r="6.5" stroke="#6e7680" stroke-width="1.2" fill="none"/><circle cx="5.2" cy="6" r="0.9" fill="#6e7680"/><circle cx="9.8" cy="6" r="0.9" fill="#6e7680"/><path d="M4.5 9 Q7.5 12 10.5 9" stroke="#6e7680" stroke-width="1.2" fill="none"/></svg>
    <svg class="abs" style="left:83px;top:100px" width="13" height="16" viewBox="0 0 13 16"><path d="M1 3 Q1 1 3 1 L8 1 L12 5 L12 13 Q12 15 10 15 L3 15 Q1 15 1 13 Z M8 1 L8 5 L12 5" stroke="#6e7680" stroke-width="1.2" fill="none" stroke-linejoin="round"/></svg>
    <svg class="abs" style="left:114px;top:100px" width="16" height="16" viewBox="0 0 16 16"><path d="M13 7 L13 3.5 Q13 1 10.5 1 L3.5 1 Q1 1 1 3.5 L1 10.5 Q1 13 3.5 13 L7 13" stroke="#6e7680" stroke-width="1.2" fill="none"/><path d="M12 9.5 L12 15.5 M9 12.5 L15 12.5" stroke="#6e7680" stroke-width="1.2"/></svg>
    <svg class="abs" style="left:142px;top:105px" width="9" height="6" viewBox="0 0 9 6"><path d="M1 1 L4.5 4.5 L8 1" stroke="#6e7680" stroke-width="1.2" fill="none"/></svg>
    <div class="abs" style="left:383px;top:0;width:1px;height:128px;background:#e8e8ec"></div>
    <div class="abs" style="left:350px;top:96px;width:24px;height:24px;border-radius:7px;background:#ececf0"></div>
    <svg class="abs" style="left:354px;top:101px" width="15" height="13" viewBox="0 0 15 13"><path d="M1 1 L14 1 L8 12.5 L6.8 7.5 Z" fill="#8d8f97"/><path d="M6.8 7.5 L10 4.3" stroke="#ececf0" stroke-width="1.2"/></svg>
  </div>
</div>

<div style="position:absolute;left:980px;top:44px;width:1px;height:676px;background:#000"></div>
<div style="position:absolute;left:0;top:719px;width:1366px;height:1px;background:#e8e8ee"></div>

<div id="taskbar">
  <div class="abs" style="left:21px;top:12px;width:20px;height:20px;border-radius:10px;background:radial-gradient(circle at 40% 35%,#ffc93c,#f49a12)"></div>
  <div class="abs" style="left:23px;top:22px;width:20px;height:11px;border-radius:6px 6px 5px 5px;background:linear-gradient(180deg,#e6f0fb,#b9d3ef)"></div>
  <div class="abs" style="left:29px;top:18px;width:10px;height:10px;border-radius:5px;background:#dce9f8"></div>
  <div class="abs" style="left:50px;top:8px;font-size:11.6px;color:#1b1b1b">28°C</div>
  <div class="abs" style="left:50px;top:24px;font-size:11.8px;color:#4a4a4a">Parc. soleado</div>

  <svg class="abs" style="left:362px;top:13px" width="23" height="23" viewBox="0 0 23 23"><defs><linearGradient id="wg" x1="0" y1="0" x2="1" y2="1"><stop offset="0" stop-color="#3cc8f6"/><stop offset="1" stop-color="#0a6fd6"/></linearGradient></defs><rect x="0" y="0" width="11" height="11" fill="url(#wg)"/><rect x="12" y="0" width="11" height="11" fill="url(#wg)"/><rect x="0" y="12" width="11" height="11" fill="url(#wg)"/><rect x="12" y="12" width="11" height="11" fill="url(#wg)"/></svg>

  <div class="abs" style="left:399px;top:8px;width:218px;height:31px;border-radius:16px;background:#f4f4fb;border:1px solid #d3d3df;box-sizing:border-box"></div>
  <svg class="abs" style="left:409px;top:15px" width="16" height="16" viewBox="0 0 16 16"><circle cx="6.5" cy="6.5" r="5.2" stroke="#222" stroke-width="1.6" fill="none"/><path d="M10.3 10.3 L15 15" stroke="#222" stroke-width="1.8"/></svg>
  <div class="abs" style="left:435px;top:15px;font-size:13.4px;color:#555">Buscar</div>
  <svg class="abs" style="left:569px;top:10px" width="48" height="29" viewBox="0 0 48 29"><defs><linearGradient id="ice" x1="0" y1="0" x2="0" y2="1"><stop offset="0" stop-color="#d6e6f7"/><stop offset="1" stop-color="#7ea8cf"/></linearGradient><linearGradient id="bear" x1="0" y1="0" x2="1" y2="1"><stop offset="0" stop-color="#f2ebf5"/><stop offset="1" stop-color="#b9a9cf"/></linearGradient></defs>
  <path d="M2 27 Q6 20 20 18 Q36 15 47 14 L46 22 Q42 28 34 28 L8 28 Q2 28 2 27Z" fill="url(#ice)"/>
  <path d="M7 5 Q8 2 11 2.5 Q14 2 15 5 Q18 6 24 5.5 Q32 5 34 11 Q36 15 35 18 L38 19 Q38 22 35 22 L31 20 L30 25 L26 25 L26 20 L17 20 L16 26 L12 26 L12 18 Q9 14 8 10 Q6 8 7 5Z" fill="url(#bear)"/>
  <circle cx="9" cy="8" r="0.8" fill="#3a3040"/></svg>

  <div class="abs" style="left:636px;top:12px;width:17px;height:16px;border-radius:2px;background:#f6f6f8;box-shadow:0 0 0 0.5px #d4d4dc"></div>
  <div class="abs" style="left:630px;top:18px;width:18px;height:17px;border-radius:2px;background:#282828"></div>
  <div class="abs" style="left:636px;top:18px;width:12px;height:10px;border-radius:1px;background:#c4c4c6"></div>

  <svg class="abs" style="left:673px;top:10px" width="26" height="26" viewBox="0 0 26 26"><path d="M13 1.5 A11 11 0 1 1 4 20 L1.5 24.5 L6.3 23 A11 11 0 0 0 13 1.5 Z" fill="none"/><path d="M3.4 19.4 A11.3 11.3 0 1 1 7 23 L1.5 24.5 Z" stroke="#1a8a42" stroke-width="2.2" fill="#e4e4f1" stroke-linejoin="round"/><path d="M8.5 7.5 Q9.5 6.5 10.5 7.5 L11.5 9.5 Q11.8 10.3 11 11 Q12 13.5 14.5 15 Q15.2 14.2 16 14.5 L18 15.5 Q19 16.5 18 17.5 Q16.5 19 13.5 17.5 Q9.5 15.5 8 11.5 Q7.5 9 8.5 7.5Z" fill="#1a8a42"/></svg>
  <div class="abs" style="left:683px;top:40px;width:6px;height:3px;border-radius:2px;background:#7a7a82"></div>

  <svg class="abs" style="left:717px;top:11px" width="25" height="25" viewBox="0 0 25 25"><defs><radialGradient id="ffg" cx="0.3" cy="0.8" r="0.9"><stop offset="0" stop-color="#ffbd2e"/><stop offset="0.5" stop-color="#ff6a2b"/><stop offset="1" stop-color="#e2175a"/></radialGradient><radialGradient id="ffp" cx="0.5" cy="0.4" r="0.6"><stop offset="0" stop-color="#9a5cf0"/><stop offset="1" stop-color="#5a2bd0"/></radialGradient></defs><path d="M12.5 24 A11 11 0 0 1 2 9 Q3 5 5 3.5 Q5.5 6 7 7 Q9 3 14 2 Q13 4 15 5 Q22 6 23.5 12 A11 11 0 0 1 12.5 24Z" fill="url(#ffg)"/><circle cx="13" cy="12.5" r="5.5" fill="url(#ffp)"/><path d="M4 13 Q6 19 12 19.5 Q17 19.5 19 15 Q16 18 12 17 Q8 16 7 12Z" fill="#ff8a2a"/></svg>
  <div class="abs" style="left:727px;top:39px;width:6px;height:3px;border-radius:2px;background:#7a7a82"></div>

  <div class="abs" style="left:762px;top:14px;width:25px;height:20px;border-radius:2px;background:linear-gradient(180deg,#f7cf4e,#f2b826)"></div>
  <div class="abs" style="left:762px;top:12px;width:11px;height:5px;border-radius:2px 2px 0 0;background:#e0a91c"></div>
  <div class="abs" style="left:767px;top:28px;width:15px;height:6px;border-radius:2px;background:#2f8fdc"></div>
  <div class="abs" style="left:771px;top:39px;width:6px;height:3px;border-radius:2px;background:#7a7a82"></div>

  <div class="abs" style="left:812px;top:13px;width:19px;height:22px;border-radius:2px;background:linear-gradient(180deg,#41a5ee,#2b7cd3 40%,#185abd 70%,#103f91)"></div>
  <div class="abs" style="left:806px;top:18px;width:13px;height:13px;border-radius:2px;background:#185abd;color:#fff;font-size:10px;font-weight:700;text-align:center;line-height:13px">W</div>

  <div class="abs" style="left:856px;top:13px;width:19px;height:22px;border-radius:2px;background:linear-gradient(180deg,#33c481,#21a366 40%,#107c41 70%,#185c37)"></div>
  <div class="abs" style="left:850px;top:18px;width:13px;height:13px;border-radius:2px;background:#107c41;color:#fff;font-size:10px;font-weight:700;text-align:center;line-height:13px">X</div>

  <div class="abs" style="left:897px;top:13px;width:18px;height:23px;border-radius:2px;background:#5b6770"></div>
  <div class="abs" style="left:899px;top:15px;width:14px;height:4px;background:#5fd0f5"></div>
  <svg class="abs" style="left:899px;top:21px" width="14" height="14" viewBox="0 0 14 14"><g fill="#e8e8ea"><rect x="0" y="0" width="3.5" height="3"/><rect x="5" y="0" width="3.5" height="3"/><rect x="10" y="0" width="3.5" height="3"/><rect x="0" y="5" width="3.5" height="3"/><rect x="5" y="5" width="3.5" height="3"/><rect x="0" y="10" width="3.5" height="3"/><rect x="5" y="10" width="3.5" height="3"/></g><rect x="10" y="5" width="3.5" height="8" fill="#2a4c9a"/></svg>

  <div class="abs" style="left:931px;top:4px;width:38px;height:38px;border-radius:4px;background:#f4f4fb"></div>
  <div class="abs" style="left:938px;top:11px;width:24px;height:24px;border-radius:12px;background:radial-gradient(circle at 50% 35%,#3d7bff,#0b4fd9)"></div>
  <svg class="abs" style="left:942px;top:18px" width="17" height="10" viewBox="0 0 17 10"><path d="M1 2 L6 2 L1 8 L6 8" stroke="#fff" stroke-width="1.5" fill="none" stroke-linejoin="round"/><path d="M8 8 L8 3.5 Q8 2 10 2 Q12 2 12 3.5 L12 8 M12 3.5 Q12 2 14 2 Q16 2 16 3.5 L16 8" stroke="#fff" stroke-width="1.5" fill="none"/></svg>
  <div class="abs" style="left:943px;top:39px;width:15px;height:3px;border-radius:2px;background:#1f6fe0"></div>

  <div class="abs" style="left:983px;top:16px;width:19px;height:15px;border-radius:2px;background:linear-gradient(180deg,#49b4f0,#1177c8)"></div>
  <div class="abs" style="left:981px;top:29px;width:23px;height:4px;border-radius:1px;background:#0d5fa6"></div>
  <div class="abs" style="left:994px;top:6px;width:18px;height:18px;border-radius:9px;background:#0b6fd0;border:1px solid #eef0f8;box-sizing:border-box;color:#fff;font-size:11px;font-weight:700;text-align:center;line-height:16px">1</div>
  <div class="abs" style="left:991px;top:39px;width:6px;height:3px;border-radius:2px;background:#7a7a82"></div>

  <svg class="abs" style="left:1102px;top:21px" width="12" height="8" viewBox="0 0 12 8"><path d="M1 6.5 L6 1.5 L11 6.5" stroke="#1b1b1b" stroke-width="1.4" fill="none"/></svg>
  <svg class="abs" style="left:1128px;top:15px" width="22" height="17" viewBox="0 0 22 17"><rect x="3" y="0.8" width="5" height="9" rx="2.5" stroke="#1d5fc9" stroke-width="1.3" fill="none"/><path d="M1 7 Q1 12.5 5.5 12.5 Q10 12.5 10 7 M5.5 12.5 L5.5 15" stroke="#1d5fc9" stroke-width="1.3" fill="none"/><path d="M21 6 L11 10 L15.5 11.5 L17 16 Z" stroke="#1d5fc9" stroke-width="1.3" fill="none" stroke-linejoin="round"/></svg>
  <div class="abs" style="left:1166px;top:10px;font-size:11.6px;color:#1b1b1b;width:22px;text-align:center">ESP</div>
  <div class="abs" style="left:1166px;top:26px;font-size:11.6px;color:#1b1b1b;width:22px;text-align:center">LAA</div>
  <svg class="abs" style="left:1206px;top:18px" width="18" height="13" viewBox="0 0 18 13"><path d="M1 5 Q9 -2 17 5" stroke="#c5c5cc" stroke-width="1.3" fill="none"/><path d="M3.8 7.6 Q9 3 14.2 7.6" stroke="#c5c5cc" stroke-width="1.3" fill="none"/><path d="M6.5 10 Q9 8 11.5 10" stroke="#1b1b1b" stroke-width="1.4" fill="none"/><circle cx="9" cy="11.5" r="1.3" fill="#1b1b1b"/></svg>
  <svg class="abs" style="left:1230px;top:17px" width="17" height="15" viewBox="0 0 17 15"><path d="M1 5 L4 5 L8 1.5 L8 13.5 L4 10 L1 10 Z" stroke="#1b1b1b" stroke-width="1.2" fill="none" stroke-linejoin="round"/><path d="M10.5 5 Q12 7.5 10.5 10" stroke="#1b1b1b" stroke-width="1.2" fill="none"/><path d="M12.5 3 Q15.5 7.5 12.5 12" stroke="#1b1b1b" stroke-width="1.2" fill="none"/><path d="M14.5 1.2 Q18.5 7.5 14.5 13.8" stroke="#c5c5cc" stroke-width="1.2" fill="none"/></svg>
  <svg class="abs" style="left:1254px;top:17px" width="21" height="13" viewBox="0 0 21 13"><rect x="0.8" y="0.8" width="17" height="11.4" rx="2.5" stroke="#1b1b1b" stroke-width="1.3" fill="#108b1a"/><rect x="18.5" y="4" width="2" height="5" rx="1" fill="#1b1b1b"/><path d="M10.5 1.5 L7 7 L9.5 7 L8.5 11.5 L12 5.5 L9.5 5.5 Z" fill="#fff"/></svg>
  <div class="abs" style="left:1318px;top:8px;font-size:11.6px;color:#1b1b1b">12:29</div>
  <div class="abs" style="left:1292px;top:25px;font-size:12.2px;color:#1b1b1b">27/2/2026</div>
</div>

</body></html>
